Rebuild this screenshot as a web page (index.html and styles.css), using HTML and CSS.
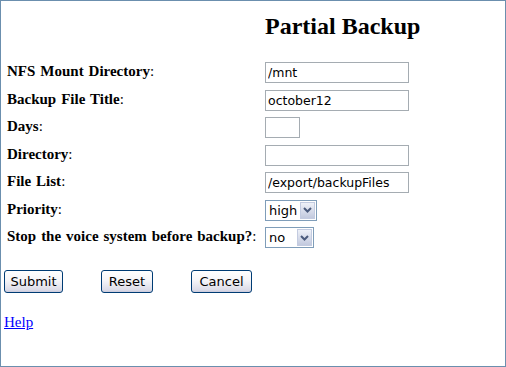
FILE: index.html
```html
<!DOCTYPE html>
<html>
<head>
<meta charset="utf-8">
<title>Partial Backup</title>
<link rel="stylesheet" href="styles.css">
</head>
<body>
<div class="page">
  <form class="backup-form">
    <div class="grid">
      <h1 class="title">Partial Backup</h1>

      <label class="label"><b>NFS Mount Directory</b>:</label>
      <div class="field"><input class="text wide" type="text" value="/mnt"></div>

      <label class="label"><b>Backup File Title</b>:</label>
      <div class="field"><input class="text wide" type="text" value="october12"></div>

      <label class="label"><b>Days</b>:</label>
      <div class="field"><input class="text short" type="text" value=""></div>

      <label class="label"><b>Directory</b>:</label>
      <div class="field"><input class="text wide" type="text" value=""></div>

      <label class="label"><b>File List</b>:</label>
      <div class="field"><input class="text wide" type="text" value="/export/backupFiles"></div>

      <label class="label"><b>Priority</b>:</label>
      <div class="field">
        <span class="select-wrap sel-high">
          <select class="select"><option>high</option><option>low</option></select>
          <span class="arrow"><svg width="9" height="6" viewBox="0 0 9 6"><path d="M1 1 L4.5 4.5 L8 1" fill="none" stroke="#4a5a7c" stroke-width="2"/></svg></span>
        </span>
      </div>

      <label class="label"><b>Stop the voice system before backup?</b>:</label>
      <div class="field">
        <span class="select-wrap sel-no">
          <select class="select"><option>no</option><option>yes</option></select>
          <span class="arrow"><svg width="9" height="6" viewBox="0 0 9 6"><path d="M1 1 L4.5 4.5 L8 1" fill="none" stroke="#4a5a7c" stroke-width="2"/></svg></span>
        </span>
      </div>
    </div>

    <div class="buttons">
      <button type="button" class="btn btn-submit">Submit</button>
      <button type="button" class="btn btn-reset">Reset</button>
      <button type="button" class="btn btn-cancel">Cancel</button>
    </div>
  </form>
  <a class="help" href="#">Help</a>
</div>
</body>
</html>
```
FILE: styles.css
```css
html, body {
  margin: 0;
  padding: 0;
  background: #ffffff;
}

.page {
  box-sizing: border-box;
  width: 506px;
  height: 367px;
  border: 1px solid #6b8fae;
  padding: 11px 0 0 3px;
  font-family: "Liberation Serif", "Times New Roman", serif;
  font-size: 15px;
  color: #000;
}

.backup-form {
  margin: 0;
}

.grid {
  display: grid;
  grid-template-columns: 258px 150px;
  grid-template-rows: auto;
  grid-auto-rows: 27.5px;
  align-items: center;
  margin-left: 3px;
}

.title {
  grid-column: 2;
  margin: 0 0 19px 0;
  padding-right: 8px;
  font-size: 24px;
  line-height: 28px;
  font-weight: bold;
  text-align: center;
  white-space: nowrap;
}

.label {
  grid-column: 1;
  line-height: 17px;
  white-space: nowrap;
  padding-bottom: 2px;
  word-spacing: 1.2px;
}

.field {
  grid-column: 2;
  display: flex;
  align-items: center;
}

.text {
  box-sizing: border-box;
  height: 21px;
  border: 1px solid #a5acb2;
  padding: 0 2px;
  margin: 0;
  font-family: "DejaVu Sans", Tahoma, sans-serif;
  font-size: 12.5px;
  color: #000;
  background: #fff;
  outline: none;
}

.wide { width: 144px; }
.short { width: 35px; }

.select-wrap {
  position: relative;
  display: inline-block;
  height: 21px;
}

.select {
  box-sizing: border-box;
  -webkit-appearance: none;
  appearance: none;
  height: 21px;
  border: 1px solid #7f9db9;
  border-radius: 0;
  padding: 0 0 0 3px;
  margin: 0;
  font-family: "DejaVu Sans", Tahoma, sans-serif;
  font-size: 13px;
  color: #000;
  background: #fff;
  outline: none;
}

.sel-high .select { width: 52px; }
.sel-no .select { width: 49px; }

.arrow {
  position: absolute;
  top: 2px;
  right: 2px;
  width: 15px;
  height: 17px;
  box-sizing: border-box;
  border: 1px solid #c3cbe0;
  background: linear-gradient(#eef1f8, #c2c9de);
  display: flex;
  align-items: center;
  justify-content: center;
  pointer-events: none;
}

.buttons {
  display: flex;
  gap: 38px;
  margin-top: 18px;
}

.btn {
  box-sizing: border-box;
  height: 23px;
  padding: 0;
  border: 1px solid #003c74;
  border-radius: 3px;
  background: linear-gradient(#ffffff 0%, #f5f5f8 45%, #dcdce8 90%, #c9c9db 100%);
  font-family: "DejaVu Sans", Tahoma, sans-serif;
  font-size: 13px;
  color: #000;
}

.btn-submit { width: 59px; }
.btn-reset { width: 52px; }
.btn-cancel { width: 61px; }

.help {
  display: inline-block;
  margin-top: 21px;
  line-height: 17px;
  color: #0000ff;
  text-decoration: underline;
}
```
